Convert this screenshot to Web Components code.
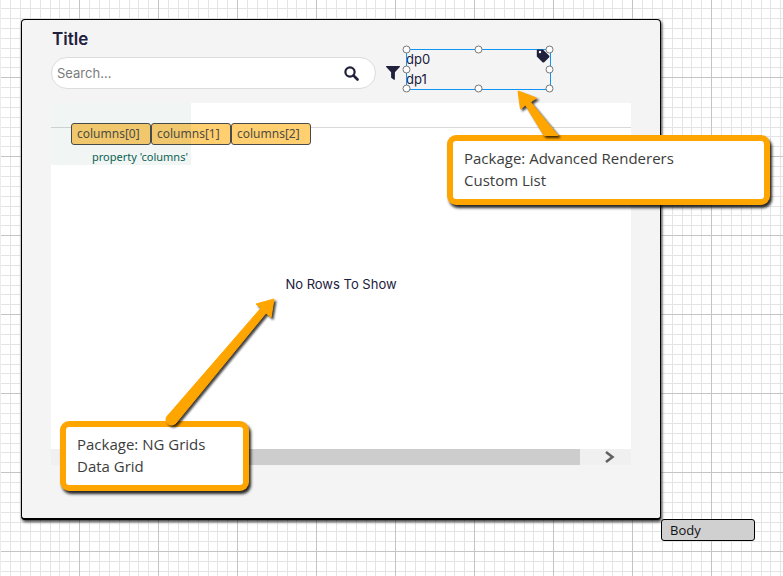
<!DOCTYPE html>
<html lang="en">
<head>
<meta charset="utf-8">
<title>Form editor</title>
<style>
html, body { margin: 0; height: 100%; }
body { font: 14px/20px "Open Sans", "Noto Sans", sans-serif; color: #20203c; overflow: hidden; }
</style>
</head>
<body>
<editor-canvas>
  <form-frame>
    <form-title>Title</form-title>
    <tool-row>
      <search-box></search-box>
      <filter-button></filter-button>
      <custom-list></custom-list>
    </tool-row>
    <data-grid></data-grid>
  </form-frame>
  <part-tab>Body</part-tab>
  <call-out style="left:447px;top:135px;width:323px">Package: Advanced Renderers<br>Custom List</call-out>
  <call-out style="left:60px;top:421px;width:189px">Package: NG Grids<br>Data Grid</call-out>
  <call-arrows></call-arrows>
</editor-canvas>
<script>
const define = (name, html) => customElements.define(name, class extends HTMLElement {
  constructor() {
    super();
    this.attachShadow({ mode: 'open' }).innerHTML = html;
  }
});

define('editor-canvas', `<style>
:host { display: block; position: relative; box-sizing: border-box; min-height: 100%; padding: 19px 122px 56px 21px; background: #fff; isolation: isolate; }
svg { position: absolute; inset: 0; width: 100%; height: 100%; z-index: -1; }
</style>
<svg aria-hidden="true" shape-rendering="crispEdges"><defs><pattern id="g" width="79" height="79" y="77" patternUnits="userSpaceOnUse">
<path fill="#e4e4e4" d="M10 0h1v79h-1zM20 0h1v79h-1zM30 0h1v79h-1zM40 0h1v79h-1zM50 0h1v79h-1zM59 0h1v79h-1zM69 0h1v79h-1zM0 10h79v1H0zM0 20h79v1H0zM0 30h79v1H0zM0 40h79v1H0zM0 50h79v1H0zM0 59h79v1H0zM0 69h79v1H0z"/>
<path fill="#c4c4c4" d="M0 0h1v79H0zM0 0h79v1H0z"/></pattern></defs><rect width="100%" height="100%" fill="url(#g)"/><rect width="1" height="100%" fill="#ececec"/></svg><slot></slot>`);

define('form-frame', `<style>
:host { display: flex; flex-direction: column; box-sizing: border-box; min-height: 501px; padding: 9px 29px 53px; background: #f4f4f4; border: 1px solid #000; border-bottom-width: 2px; border-radius: 4px; box-shadow: 1px 2px 3px rgba(0,0,0,.75); }
</style><slot></slot>`);

define('form-title', `<style>
:host { display: block; }
h1 { margin: 0; padding-left: 1px; font: 600 17px/20px Inter, sans-serif; color: #20203c; }
</style><h1><slot></slot></h1>`);

define('tool-row', `<style>
:host { display: flex; align-items: flex-start; height: 54px; }
</style><slot></slot>`);

define('search-box', `<style>
:host { display: block; flex: 0 1 325px; margin-top: 8px; }
form { display: flex; align-items: center; box-sizing: border-box; height: 32px; padding: 0 16px 0 5px; border: 1px solid #dcdcdc; border-radius: 16px; background: #fff; }
input { flex: 1; min-width: 0; padding: 0; border: 0; outline: 0; background: none; font: 13px/20px Inter, sans-serif; color: #20203c; }
input::placeholder { color: #7b7b7b; opacity: 1; }
button { display: flex; padding: 0; border: 0; background: none; color: #20203c; }
</style><form><input type="search" aria-label="Search" placeholder="Search…"><button type="button" aria-label="Search"><svg width="15" height="15" viewBox="0 0 15 15" fill="none" stroke="currentColor"><circle cx="6" cy="6" r="4.6" stroke-width="2.2"/><path d="M9.5 9.5L13.5 13.5" stroke-width="2.6" stroke-linecap="round"/></svg></button></form>`);

define('filter-button', `<style>
:host { display: block; margin: 17px 6px 0 10px; }
button { display: flex; padding: 0; border: 0; background: none; color: #20203c; }
</style><button type="button" aria-label="Filter"><svg width="14" height="14" viewBox="0 0 14 14" fill="currentColor"><path d="M.6 0h12.8c.6 0 .8.7.4 1.1L8.9 6.2v7c0 .5-.6.8-1 .5L5.5 12c-.3-.2-.4-.4-.4-.7V6.2L.2 1.1C-.2.7 0 0 .6 0z"/></svg></button>`);

define('custom-list', `<style>
:host { display: block; position: relative; width: 145px; height: 41px; outline: 1px solid #0d94f5; outline-offset: -1px; }
ul { margin: 0; padding: 0; list-style: none; font: 13px/20px Inter, sans-serif; }
svg { position: absolute; left: -4px; top: -4px; overflow: visible; }
</style><ul><li>dp0</li><li>dp1</li></ul>
<svg width="153" height="49" aria-hidden="true"><path fill="#20203c" d="M135 4.500h6l6 6c.6.600.6 1.300 0 1.900l-4.800 4.800c-.5.500-1.200.500-1.700 0l-5.700-5.700V5z"/><circle cx="138" cy="7" r="1.200" fill="#fff"/>
<g fill="#fff" stroke="#777"><circle cx="4.500" cy="4.500" r="3.500"/><circle cx="76.500" cy="4.500" r="3.500"/><circle cx="147.500" cy="4.500" r="3.500"/><circle cx="4.500" cy="24.500" r="3.500"/><circle cx="147.500" cy="24.500" r="3.500"/><circle cx="4.500" cy="43.500" r="3.500"/><circle cx="76.500" cy="43.500" r="3.500"/><circle cx="147.500" cy="43.500" r="3.500"/></g></svg>`);

define('data-grid', `<style>
:host { display: flex; flex-direction: column; flex: 1; position: relative; background: #fff; }
header { height: 24px; border-bottom: 1px solid #d9d9d9; }
.design { position: absolute; left: 0; top: 0; font-family: "Noto Sans", sans-serif; }
.shade { position: absolute; left: 0; top: 0; width: 140px; height: 62px; background: rgba(20,90,70,.06); }
.cols { display: flex; padding: 20px 0 0 20px; }
.cols span { box-sizing: border-box; width: 80px; height: 22px; padding-left: 5px; border: 1px solid #4a4a4a; border-radius: 3px; background: #ffcf70; font-size: 12px; line-height: 20px; color: #504c42; }
.prop { padding-left: 41px; font-size: 11px; line-height: 24px; color: #0b6355; }
.empty { flex: 1; display: grid; place-items: center; padding-bottom: 9px; font: 13px/20px Inter, sans-serif; }
.bar { display: flex; height: 16px; background: #f0f0f0; }
.thumb { flex: 1; margin-left: 50px; background: #cdcdcd; }
.bar button { display: grid; place-items: center; width: 51px; padding: 0 0 0 8px; border: 0; background: none; }
</style><header></header>
<div class="design"><div class="cols"><span>columns[0]</span><span>columns[1]</span><span>columns[2]</span></div><div class="prop">property 'columns'</div><div class="shade"></div></div>
<div class="empty">No Rows To Show</div>
<div class="bar"><div class="thumb"></div><button type="button" aria-label="Scroll right"><svg width="10" height="12" viewBox="0 0 10 12" fill="none" stroke="#606060" stroke-width="2.5"><path d="M1 1L7.500 6L1 11"/></svg></button></div>`);

define('part-tab', `<style>
:host { display: block; position: absolute; left: 661px; top: 519px; box-sizing: border-box; width: 94px; height: 22px; padding-left: 8px; border: 1px solid #000; border-radius: 3px; background: #d0d0d0; font-size: 13px; line-height: 21px; color: #111; }
</style><slot></slot>`);

define('call-out', `<style>
:host { display: block; position: absolute; box-sizing: border-box; padding: 6px; border-radius: 9px; background: #ffa500; box-shadow: 2px 3px 3px rgba(0,0,0,.85); }
div { padding: 6px 11px 8px; border-radius: 3px; background: #fff; font: 15px/22px "Open Sans", "Noto Sans", sans-serif; color: #3c3c3c; white-space: nowrap; }
</style><div><slot></slot></div>`);

define('call-arrows', `<style>
:host { display: block; position: absolute; inset: 0; pointer-events: none; }
svg { display: block; filter: drop-shadow(2px 2px 1px rgba(0,0,0,.75)); }
</style><svg width="100%" height="100%" fill="#ffa500" stroke="#ffa500" stroke-linejoin="round" aria-hidden="true"><path d="M518 91L536.500 98l-6 4L558 135.500h-14L525.500 105l-5 4z"/><path d="M274 299l-3 18.500-5-4.500L176 423c-5 5-12 0-9.500-6L261 308l-5-4z"/></svg>`);
</script>
</body>
</html>
